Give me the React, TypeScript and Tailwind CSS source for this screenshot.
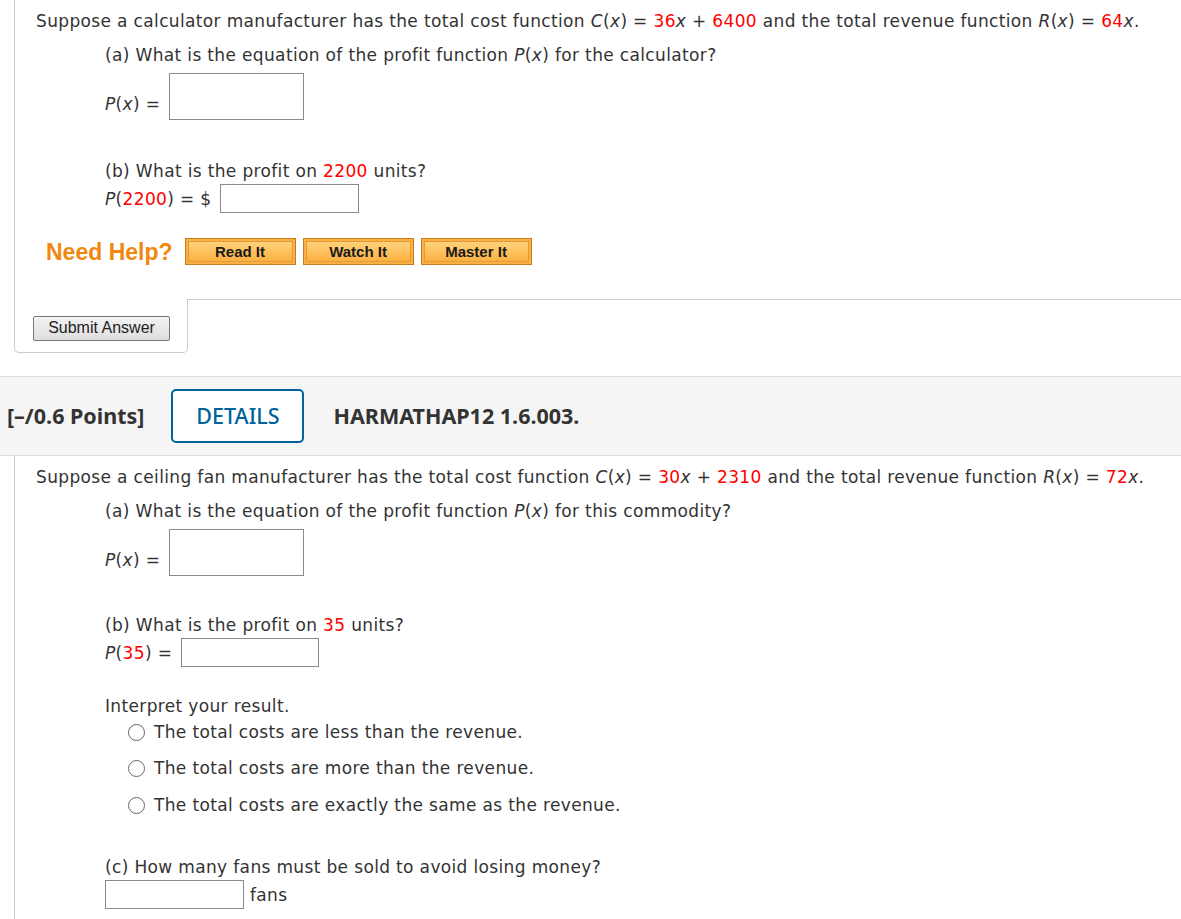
const R = ({ children }: { children: React.ReactNode }) => <span className="text-[#ff0000]">{children}</span>;
const I = ({ children }: { children: React.ReactNode }) => <i>{children}</i>;

function Box({ className }: { className: string }) {
  return <div className={`border border-[#8a8a8a] bg-white ${className}`} />;
}

function HelpButton({ label }: { label: string }) {
  return (
    <button className="w-[111px] h-[27px] border border-[#c9791f] bg-[#fbb040] p-[2px]">
      <span className="flex h-full w-full items-center justify-center border border-[#e39a3c] bg-gradient-to-b from-[#ffd27a] to-[#fbb13f] font-['Liberation_Sans',Arial,sans-serif] text-[15px] font-bold leading-none text-[#1a1a1a]">
        {label}
      </span>
    </button>
  );
}

function Radio({ children, className }: { children: React.ReactNode; className: string }) {
  return (
    <div className={`flex h-6 items-center pl-[23px] ${className}`}>
      <span className="mr-[9px] h-[17px] w-[17px] rounded-full border border-[#666] bg-white" />
      <span>{children}</span>
    </div>
  );
}

export default function App() {
  return (
    <div className="w-[1181px] h-[919px] overflow-hidden bg-white font-['DejaVu_Sans',Verdana,sans-serif] text-[17px] tracking-[0.35px] leading-6 text-[#333]">
      {/* question 1 */}
      <div className="ml-[14px] border-l border-[#ccc] pl-[21px]">
        <p className="pt-[9px] h-[32px] whitespace-nowrap">
          Suppose a calculator manufacturer has the total cost function <I>C</I>(<I>x</I>) = <R>36</R><I>x</I> + <R>6400</R> and the total revenue function <I>R</I>(<I>x</I>) = <R>64</R><I>x</I>.
        </p>
        <div className="pl-[69px]">
          <p className="mt-[11px]">
            (a) What is the equation of the profit function <I>P</I>(<I>x</I>) for the calculator?
          </p>
          <div className="mt-[6px] flex items-end">
            <span className="mb-[4px] mr-[9px]">
              <I>P</I>(<I>x</I>) =
            </span>
            <Box className="w-[135px] h-[47px]" />
          </div>
          <p className="mt-[39px]">
            (b) What is the profit on <R>2200</R> units?
          </p>
          <div className="mt-[1px] flex items-center">
            <span className="mr-[8px]">
              <I>P</I>(<R>2200</R>) = $
            </span>
            <Box className="w-[139px] h-[29px]" />
          </div>
        </div>
        <div className="mt-[25px] flex items-center pl-[10px]">
          <span className="mr-[12px] font-['Liberation_Sans',Arial,sans-serif] text-[23px] tracking-normal font-bold text-[#f0880f]">Need Help?</span>
          <div className="flex gap-[7px] tracking-normal">
            <HelpButton label="Read It" />
            <HelpButton label="Watch It" />
            <HelpButton label="Master It" />
          </div>
        </div>
        <div className="h-[34px]" />
      </div>
      <div className="flex">
        <div className="ml-[14px] h-[54px] w-[174px] rounded-b-[5px] border-x border-b border-[#ccc] pl-[18px] pt-[16px]">
          <button className="h-[25px] w-[137px] rounded-[2px] border border-[#777] bg-gradient-to-b from-[#f3f3f3] to-[#dedede] font-['Liberation_Sans',Arial,sans-serif] text-[16px] tracking-normal leading-none text-[#222]">
            Submit Answer
          </button>
        </div>
        <div className="flex-1 border-t border-[#ccc]" />
      </div>

      {/* question 2 header */}
      <div className="mt-[23px] flex h-[80px] items-center border-y border-[#ddd] bg-[#f5f5f5] font-['Noto_Sans',sans-serif] text-[21.5px] tracking-normal">
        <span className="ml-[7px] font-bold text-[#333]">[–/0.6 Points]</span>
        <span className="ml-[27px] flex h-[54px] w-[133px] items-center justify-center rounded-[5px] border-2 border-[#00629b] bg-white font-medium text-[#00629b]">
          DETAILS
        </span>
        <span className="ml-[29px] font-bold text-[#333]">HARMATHAP12 1.6.003.</span>
      </div>

      {/* question 2 */}
      <div className="ml-[14px] border-l border-[#ccc] pl-[21px] pb-10">
        <p className="pt-[9px] h-[32px] whitespace-nowrap">
          Suppose a ceiling fan manufacturer has the total cost function <I>C</I>(<I>x</I>) = <R>30</R><I>x</I> + <R>2310</R> and the total revenue function <I>R</I>(<I>x</I>) = <R>72</R><I>x</I>.
        </p>
        <div className="pl-[69px]">
          <p className="mt-[11px]">
            (a) What is the equation of the profit function <I>P</I>(<I>x</I>) for this commodity?
          </p>
          <div className="mt-[6px] flex items-end">
            <span className="mb-[4px] mr-[9px]">
              <I>P</I>(<I>x</I>) =
            </span>
            <Box className="w-[135px] h-[47px]" />
          </div>
          <p className="mt-[37px]">
            (b) What is the profit on <R>35</R> units?
          </p>
          <div className="mt-[1px] flex items-center">
            <span className="mr-[9px]">
              <I>P</I>(<R>35</R>) =
            </span>
            <Box className="w-[138px] h-[29px]" />
          </div>
          <p className="mt-[27px]">Interpret your result.</p>
          <Radio className="mt-[2px]">The total costs are less than the revenue.</Radio>
          <Radio className="mt-[12px]">The total costs are more than the revenue.</Radio>
          <Radio className="mt-[13px]">The total costs are exactly the same as the revenue.</Radio>
          <p className="mt-[38px]">(c) How many fans must be sold to avoid losing money?</p>
          <div className="mt-[1px] flex items-center">
            <Box className="w-[139px] h-[29px]" />
            <span className="ml-[6px]">fans</span>
          </div>
        </div>
      </div>
    </div>
  );
}
